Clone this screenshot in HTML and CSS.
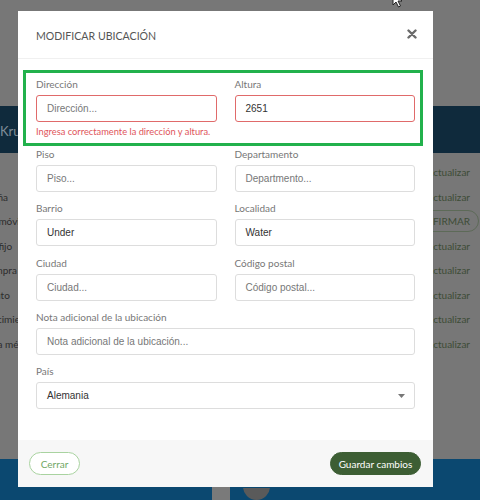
FILE: index.html
```html
<!DOCTYPE html>
<html lang="es">
<head>
<meta charset="utf-8">
<title>Modificar ubicación</title>
<link rel="stylesheet" href="styles.css">
</head>
<body>
<div class="page">
  <div class="page-top"></div>
  <header class="navbar"><span class="brand">Krus</span></header>
  <ul class="list">
    <li class="list-row"><span class="row-label"></span><span class="row-action">Actualizar</span></li>
    <li class="list-row"><span class="row-label">Contraseña</span><span class="row-action">Actualizar</span></li>
    <li class="list-row"><span class="row-label">Teléfono móvil</span><span class="row-action pill">CONFIRMAR</span></li>
    <li class="list-row"><span class="row-label">Teléfono fijo</span><span class="row-action">Actualizar</span></li>
    <li class="list-row"><span class="row-label">Email compra</span><span class="row-action">Actualizar</span></li>
    <li class="list-row"><span class="row-label">Documento</span><span class="row-action">Actualizar</span></li>
    <li class="list-row"><span class="row-label">Fecha nacimiento</span><span class="row-action">Actualizar</span></li>
    <li class="list-row"><span class="row-label">Cobertura médica</span><span class="row-action">Actualizar</span></li>
  </ul>
  <div class="page-fill"></div>
  <footer class="bottombar">
    <span class="bar-block"></span>
    <span class="avatar"><span class="avatar-head"></span></span>
  </footer>
</div>

<svg class="cursor" width="12" height="16" viewBox="0 0 12 16">
  <path d="M1 1 L1 13 L4 10 L6.5 15 L8.5 14 L6 9 L10 9 Z" fill="#fff" stroke="#222" stroke-width="1"/>
</svg>

<div class="modal">
  <div class="modal-header">
    <h2 class="modal-title">MODIFICAR UBICACIÓN</h2>
    <button class="close" type="button" aria-label="Cerrar">
      <svg width="10" height="10" viewBox="0 0 10 10"><path d="M1.5 1.5 L8.5 8.5 M8.5 1.5 L1.5 8.5" stroke="#6b6b6b" stroke-width="2.4" stroke-linecap="round"/></svg>
    </button>
  </div>
  <div class="modal-body">
    <div class="form-row highlight">
      <div class="field">
        <label class="label">Dirección</label>
        <div class="input invalid placeholder">Dirección...</div>
        <div class="error">Ingresa correctamente la dirección y altura.</div>
      </div>
      <div class="field">
        <label class="label">Altura</label>
        <div class="input invalid">2651</div>
      </div>
    </div>
    <div class="form-row">
      <div class="field">
        <label class="label">Piso</label>
        <div class="input placeholder">Piso...</div>
      </div>
      <div class="field">
        <label class="label">Departamento</label>
        <div class="input placeholder">Departmento...</div>
      </div>
    </div>
    <div class="form-row">
      <div class="field">
        <label class="label">Barrio</label>
        <div class="input">Under</div>
      </div>
      <div class="field">
        <label class="label">Localidad</label>
        <div class="input">Water</div>
      </div>
    </div>
    <div class="form-row">
      <div class="field">
        <label class="label">Ciudad</label>
        <div class="input placeholder">Ciudad...</div>
      </div>
      <div class="field">
        <label class="label">Código postal</label>
        <div class="input placeholder">Código postal...</div>
      </div>
    </div>
    <div class="form-row">
      <div class="field">
        <label class="label">Nota adicional de la ubicación</label>
        <div class="input placeholder">Nota adicional de la ubicación...</div>
      </div>
    </div>
    <div class="form-row">
      <div class="field">
        <label class="label">País</label>
        <div class="input select">
          <span>Alemania</span>
          <svg width="7" height="4" viewBox="0 0 7 4"><path d="M0 0 L7 0 L3.5 4 Z" fill="#777"/></svg>
        </div>
      </div>
    </div>
  </div>
  <div class="modal-footer">
    <button class="btn btn-outline" type="button">Cerrar</button>
    <button class="btn btn-primary" type="button">Guardar cambios</button>
  </div>
</div>
</body>
</html>
```

FILE: styles.css
```css
* { box-sizing: border-box; }

html, body {
  margin: 0;
  padding: 0;
  width: 480px;
  height: 500px;
  overflow: hidden;
}

body {
  font-family: "Lato", "Liberation Sans", sans-serif;
  background: #777777;
  position: relative;
}

/* ---- dimmed page behind the dialog ---- */
.page {
  height: 500px;
  display: flex;
  flex-direction: column;
  background: #777777;
}

.page-top { height: 106px; }

.navbar {
  height: 47px;
  background: #0f2a3c;
  display: flex;
  align-items: center;
  padding-top: 2px;
}

.brand {
  color: #7f8d97;
  font-size: 13px;
  white-space: nowrap;
}

.list {
  list-style: none;
  margin: 0;
  padding: 7px 0 0;
}

.list-row {
  height: 24.5px;
  display: flex;
  align-items: center;
  justify-content: space-between;
  font-size: 10px;
}

.row-label {
  color: #2c2c2c;
  white-space: nowrap;
  margin-left: -42px;
}

.row-action {
  color: #3d4c36;
  margin-right: 10px;
  white-space: nowrap;
}

.row-action.pill {
  margin-right: 1px;
  padding: 4px 8px 4px 10px;
  border: 1px solid #5d6a58;
  border-radius: 12px;
  font-size: 10px;
}

.page-fill { flex: 1; }

.bottombar {
  height: 41px;
  background: #0b4870;
  display: flex;
  align-items: flex-end;
  padding-left: 212px;
  gap: 13px;
}

.bar-block {
  width: 18px;
  height: 14px;
  background: #7a7a7a;
}

.avatar {
  width: 27px;
  height: 12px;
  overflow: hidden;
  display: flex;
  justify-content: center;
}

.avatar-head {
  display: block;
  width: 27px;
  height: 27px;
  border-radius: 50%;
  background: radial-gradient(ellipse 60% 40% at 50% 78%, #5a5a5a 98%, #7b7b7b 100%);
  margin-top: -15px;
}

.cursor {
  position: absolute;
  left: 392px;
  top: -8px;
}

/* ---- dialog ---- */
.modal {
  position: absolute;
  left: 18px;
  top: 11px;
  width: 415px;
  height: 476px;
  background: #ffffff;
  display: flex;
  flex-direction: column;
}

.modal-header {
  height: 48px;
  border-bottom: 1px solid #f0f0f0;
  display: flex;
  align-items: center;
  justify-content: space-between;
  padding: 2px 18px 0;
}

.modal-title {
  margin: 0;
  font-size: 10.6px;
  font-weight: 400;
  color: #555555;
}

.close {
  border: 0;
  background: none;
  padding: 0;
  width: 10px;
  height: 10px;
  display: flex;
  margin-right: -2px;
  margin-top: -3px;
}

.modal-body {
  flex: 1;
  padding: 18px 18px 0;
}

.form-row {
  display: flex;
  gap: 18px;
  margin-bottom: 9.25px;
}

.form-row.highlight {
  position: relative;
  margin-bottom: 9px;
}

.form-row.highlight::before {
  content: "";
  position: absolute;
  top: -7px;
  left: -13px;
  right: -8px;
  bottom: -8px;
  border: 3px solid #22b14c;
  pointer-events: none;
}

.field {
  flex: 1 1 0;
  min-width: 0;
  display: flex;
  flex-direction: column;
}

.label {
  font-size: 10px;
  line-height: 14px;
  color: #777777;
  margin-bottom: 4px;
}

.input {
  height: 27px;
  border: 1px solid #dddddd;
  border-radius: 3px;
  padding: 0 10px;
  display: flex;
  align-items: center;
  font-family: "Liberation Sans", Arial, sans-serif;
  font-size: 10px;
  color: #333333;
}

.input.placeholder { color: #777777; }

.input.invalid { border-color: #e06a6a; }

.input.select {
  justify-content: space-between;
  padding-right: 9px;
}

.error {
  margin-top: 3px;
  font-size: 9.3px;
  line-height: 13px;
  color: #e0555a;
  white-space: nowrap;
}

.modal-footer {
  height: 47px;
  background: #f7f7f7;
  display: flex;
  align-items: center;
  justify-content: space-between;
  padding: 0 12px 0 11px;
}

.btn {
  height: 23px;
  border-radius: 12px;
  font-family: "Lato", sans-serif;
  font-size: 10px;
  padding: 0;
  display: flex;
  align-items: center;
  justify-content: center;
}

.btn-outline {
  width: 51px;
  background: #ffffff;
  border: 1px solid #a9d3a0;
  color: #6fa664;
}

.btn-primary {
  width: 91px;
  background: #3d5e34;
  border: 1px solid #3d5e34;
  color: #ffffff;
}
```
